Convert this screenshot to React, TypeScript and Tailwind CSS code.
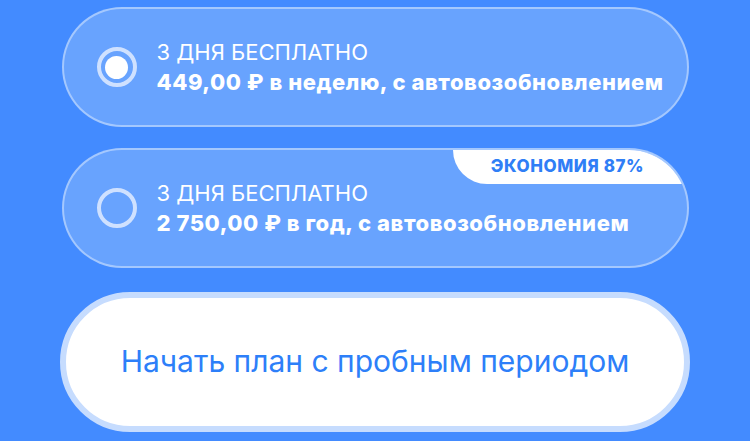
import React from "react";

const font = { fontFamily: "Inter, 'Noto Sans', sans-serif" };

const Radio = ({ checked }: { checked?: boolean }) => (
  <span className="flex items-center justify-center w-[40px] h-[40px] rounded-full border-[4px] border-[#cfe1ff] shrink-0">
    {checked && <span className="w-[23px] h-[23px] rounded-full bg-white" />}
  </span>
);

const PlanCard = ({
  price,
  checked,
  badge,
}: {
  price: string;
  checked?: boolean;
  badge?: string;
}) => (
  <div className="relative flex items-center h-[120px] w-[627px] rounded-full border-2 border-white/40 bg-[#68a3fe] overflow-hidden pl-[33px]">
    {badge && (
      <div className="absolute top-0 right-0 flex items-center justify-center w-[234px] h-[34px] bg-white rounded-bl-[44px] pr-[4px]">
        <span className="text-[17px] font-extrabold tracking-[0.035em] text-[#2f7ef6]">
          {badge}
        </span>
      </div>
    )}
    <Radio checked={checked} />
    <div className="flex flex-col ml-[20px] text-white leading-[30px]">
      <span className="text-[22px] font-normal">3 ДНЯ БЕСПЛАТНО</span>
      <span className="text-[22px] font-extrabold tracking-[0.025em]">
        {price}
      </span>
    </div>
  </div>
);

export default function App() {
  return (
    <div
      className="w-[750px] h-[441px] bg-[#438bff] flex flex-col items-center pt-[7px] overflow-hidden"
      style={font}
    >
      <PlanCard checked price="449,00 ₽ в неделю, с автовозобновлением" />
      <div className="h-[21px]" />
      <PlanCard
        badge="ЭКОНОМИЯ 87%"
        price="2 750,00 ₽ в год, с автовозобновлением"
      />
      <div className="h-[24px]" />
      <button className="flex items-center justify-center w-[630px] h-[140px] rounded-full border-[6px] border-[#c6dcfe] bg-white">
        <span className="text-[30px] text-[#2d7ff9] pb-[2px]">
          Начать план с пробным периодом
        </span>
      </button>
    </div>
  );
}
